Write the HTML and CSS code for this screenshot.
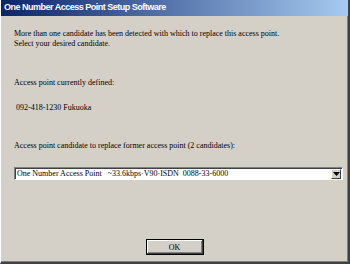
FILE: index.html
```html
<!DOCTYPE html>
<html lang="en">
<head>
  <meta charset="UTF-8">
  <link rel="stylesheet" href="styles.css">
</head>
<body>
  <div class="window">
    <div class="titlebar">One Number Access Point Setup Software</div>
    <div class="content">
      <p class="intro">More than one candidate has been detected with which to replace this access point.<br>Select your desired candidate.</p>
      <p class="label">Access point currently defined:</p>
      <p class="current">092-418-1230 Fukuoka</p>
      <p class="label">Access point candidate to replace former access point (2 candidates):</p>
      <div class="select">
        <span class="select-text">One Number Access Point &nbsp;&nbsp;~33.6kbps&middot;V90&middot;ISDN &nbsp;0088-33-6000</span>
        <span class="select-btn">
          <svg width="7" height="4" viewBox="0 0 7 4"><path d="M0 0h7L3.5 4z" fill="#000"/></svg>
        </span>
      </div>
      <div class="actions">
        <button class="ok-btn">OK</button>
      </div>
    </div>
  </div>
</body>
</html>
```

FILE: styles.css
```css
body {
  margin: 0;
  background: #d4d0c8;
}

.window {
  width: 350px;
  height: 264px;
  box-sizing: border-box;
  background: #d4d0c8;
  border-left: 1px solid #ffffff;
  border-right: 2px solid #404040;
  border-bottom: 2px solid #404040;
  box-shadow: inset -1px -1px 0 #808080;
  display: flex;
  flex-direction: column;
}

.titlebar {
  height: 16px;
  line-height: 15px;
  padding-left: 3px;
  background: linear-gradient(to right, #0a246a, #a6caf0);
  color: #ffffff;
  font-family: "Liberation Sans", Arial, sans-serif;
  font-weight: bold;
  font-size: 9px;
  letter-spacing: -0.5px;
  white-space: nowrap;
}

.content {
  flex: 1;
  padding: 13px 0 0 13px;
  font-family: "Liberation Serif", "Times New Roman", serif;
  font-size: 8px;
  line-height: 10px;
  color: #000000;
  display: flex;
  flex-direction: column;
}

.content p {
  margin: 0;
}

.intro {
  margin-bottom: 29px !important;
}

.label {
  margin-bottom: 15px !important;
}

.current {
  margin-left: 2px !important;
  margin-bottom: 28px !important;
}

.select {
  margin-top: 1px;
  width: 329px;
  height: 13px;
  box-sizing: border-box;
  background: #ffffff;
  border: 1px solid;
  border-color: #808080 #ffffff #ffffff #808080;
  box-shadow: inset 1px 1px 0 #404040;
  display: flex;
  align-items: center;
  justify-content: space-between;
  padding-left: 2px;
}

.select-text {
  white-space: nowrap;
}

.select-btn {
  width: 10px;
  height: 10px;
  margin-right: 1px;
  box-sizing: border-box;
  background: #d4d0c8;
  border: 1px solid;
  border-color: #ffffff #404040 #404040 #ffffff;
  display: flex;
  align-items: center;
  justify-content: center;
}

.actions {
  margin-top: auto;
  margin-bottom: 7px;
  display: flex;
  justify-content: center;
  padding-right: 13px;
}

.ok-btn {
  width: 58px;
  height: 16px;
  padding: 0;
  background: #d4d0c8;
  font-family: "Liberation Serif", "Times New Roman", serif;
  font-size: 8px;
  color: #000000;
  border: 1px solid #000000;
  box-shadow: inset -1px -1px 0 #404040, inset 1px 1px 0 #ffffff, inset -2px -2px 0 #808080;
}
```
